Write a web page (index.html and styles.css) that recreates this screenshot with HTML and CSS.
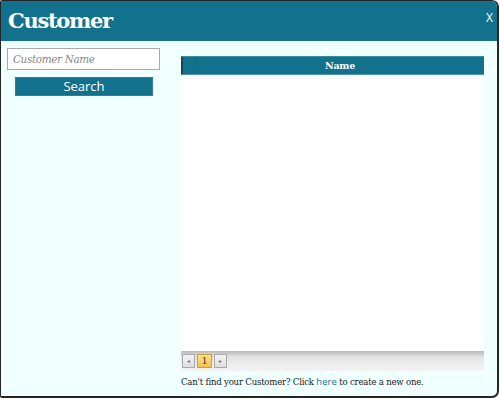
FILE: index.html
```html
<!DOCTYPE html>
<html lang="en">
<head>
  <meta charset="utf8">
  <title>Customer</title>
  <link rel="stylesheet" href="styles.css">
</head>
<body>
  <div class="window">
    <header class="titlebar">
      <h1>Customer</h1>
      <span class="close">X</span>
    </header>

    <div class="content">
      <section class="search">
        <input type="text" class="name" placeholder="Customer Name">
        <button type="button" class="go">Search</button>
      </section>

      <section class="results">
        <div class="grid">
          <div class="grid-head">
            <span class="col-sel"></span>
            <span class="col-name">Name</span>
          </div>
          <div class="grid-body"></div>
          <div class="pager">
            <span class="pg prev">&#9666;</span>
            <span class="pg current">1</span>
            <span class="pg next">&#9656;</span>
          </div>
        </div>
        <p class="hint">Can't find your Customer? Click <a href="#">here</a> to create a new one.</p>
      </section>
    </div>
  </div>
</body>
</html>
```

FILE: styles.css
```css
* { box-sizing: border-box; }
body { margin: 0; background: #fff; font-family: "DejaVu Serif", serif; }

.window { width: 499px; height: 398px; border: 1px solid #262626; border-right-width: 2px; border-bottom-width: 2px; border-radius: 2px 7px 7px 2px; background: #f0ffff; overflow: hidden; display: flex; flex-direction: column; }

.titlebar { height: 40px; background: #12718d; color: #fff; display: flex; justify-content: space-between; align-items: flex-start; padding: 0 4px 0 7px; }
.titlebar h1 { margin: 0; font-size: 21px; line-height: 40px; font-weight: bold; letter-spacing: -1.3px; }
.close { font-family: "Open Sans", sans-serif; font-size: 12px; margin-top: 8px; }

.content { flex: 1; display: flex; }

.search { width: 173px; padding: 7px 0 0 6px; display: flex; flex-direction: column; align-items: flex-start; }
.name { width: 153px; height: 22px; border: 1px solid #aaa; background: #fff; padding: 0 5px; font-family: "DejaVu Serif Condensed", "DejaVu Serif", serif; font-stretch: condensed; font-style: italic; font-size: 11.5px; letter-spacing: -0.3px; }
.name::placeholder { color: #888; }
.go { margin: 7px 0 0 8px; width: 138px; height: 19px; border: 1px solid #2c819a; background: #12718d; color: #fff; font-family: "Open Sans", sans-serif; font-size: 13px; line-height: 15px; padding: 0; }

.results { padding: 15px 0 0 7px; }
.grid { width: 303px; height: 315px; display: flex; flex-direction: column; background: #fff; }
.grid-head { height: 19px; display: flex; background: #12718d; border-top: 1px solid #3d8ba1; border-bottom: 1px solid #4b95aa; }
.col-sel { width: 15px; border-left: 2px solid #1b4654; border-right: 1px solid #555; }
.col-name { flex: 1; text-align: center; color: #fff; font-size: 9.5px; font-weight: bold; line-height: 17px; letter-spacing: -0.2px; }
.grid-body { flex: 1; }

.pager { height: 20px; display: flex; align-items: center; gap: 2px; padding: 0 0 0 1px; background: linear-gradient(#b9b9b9, #e2e2e2 30%, #ececec 60%, #f2f2f2); }
.pg { width: 13px; height: 14px; border: 1px solid #aaa; background: linear-gradient(#f4f4f4, #ddd); color: #777; font-size: 6px; line-height: 12px; text-align: center; }
.pg.current { width: 15px; border-color: #c9a04a; background: linear-gradient(#fde08a, #f6c24f); color: #333; font-size: 9px; }

.hint { margin: 4px 0 0; font-family: "DejaVu Serif Condensed", "DejaVu Serif", serif; font-stretch: condensed; font-size: 9.5px; letter-spacing: -0.2px; color: #222; }
.hint a { color: #1c7590; text-decoration: none; font-family: "Open Sans", sans-serif; font-stretch: normal; letter-spacing: 0; }
```
